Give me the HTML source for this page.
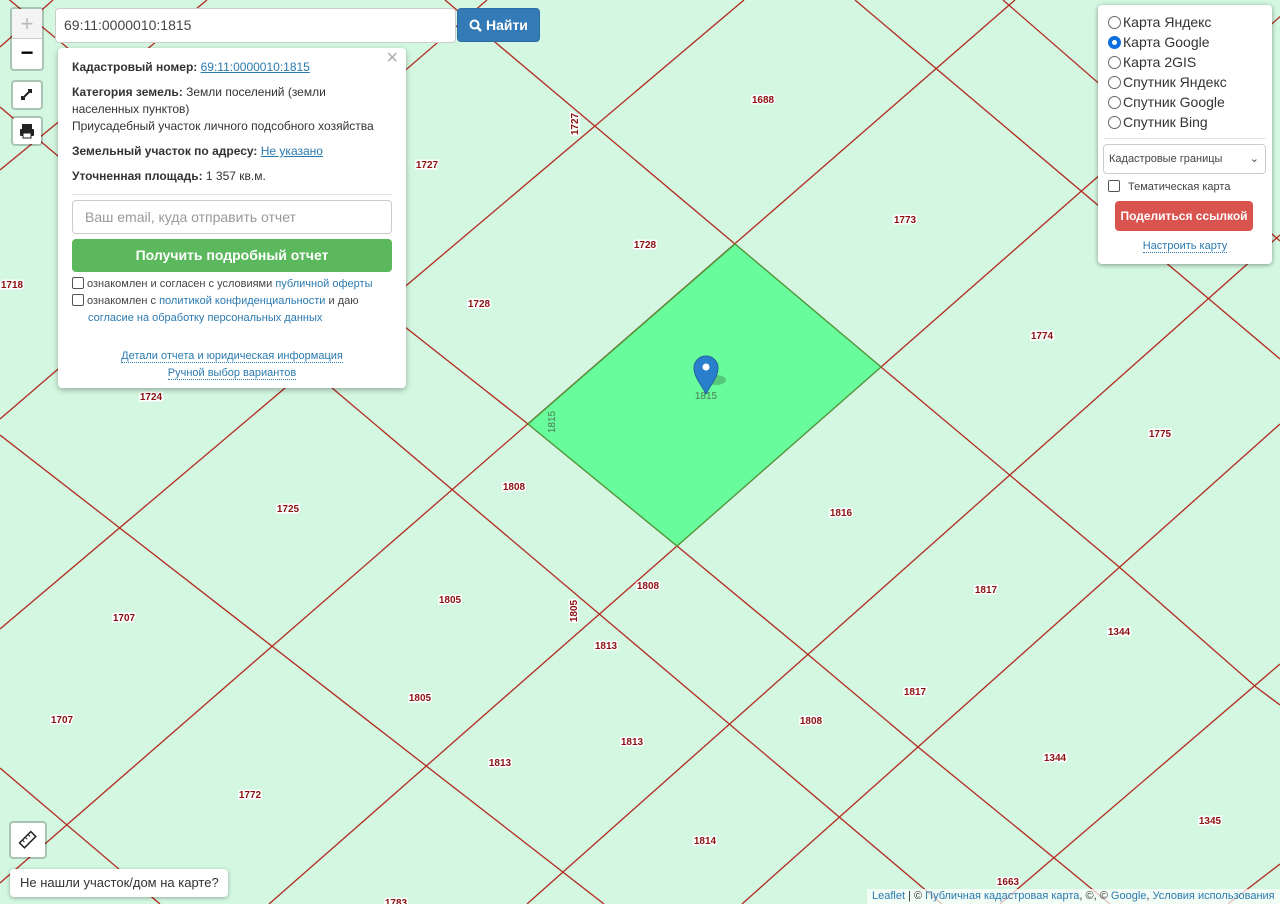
<!DOCTYPE html>
<html><head><meta charset="utf-8"><style>
*{box-sizing:border-box}
body{margin:0;width:1280px;height:904px;overflow:hidden;position:relative;background:#d3f7e0;font-family:"Liberation Sans",Arial,sans-serif;color:#333}
.abs{position:absolute}
svg text.l{font:bold 10px "Liberation Sans",sans-serif;fill:#8b1010;stroke:#fff;stroke-width:3px;paint-order:stroke;text-anchor:middle}
.btn{position:absolute;background:#fff;border:2px solid rgba(0,0,0,.2);border-radius:4px;background-clip:padding-box}
a{color:#2a7ab0}
.pop{left:58px;top:48px;width:348px;height:340px;background:#fff;border-radius:4px;box-shadow:0 2px 6px rgba(0,0,0,.3);font-size:12px;line-height:17px}
.pop b{color:#333}
.cb{display:inline-block;width:12px;height:12px;border:1px solid #555;border-radius:2px;vertical-align:-2px;margin-right:3px;background:#fff}
.rp{left:1098px;top:5px;width:174px;height:259px;background:#fff;border-radius:4px;box-shadow:0 1px 5px rgba(0,0,0,.4);font-size:14px}
.rad{display:block;height:20px;line-height:20px;padding-left:10px;color:#333}
.rad i{display:inline-block;width:13px;height:13px;border:1px solid #666;border-radius:50%;vertical-align:-2px;margin-right:2px}
</style></head><body>
<svg class="abs" style="left:0;top:0" width="1280" height="904">
<g stroke="#b32a20" stroke-width="1.3" fill="none">
<polyline points="445,0 735,244 881,367 1118,566 1256,687 1280,705"/>
<line x1="855" y1="0" x2="1280" y2="359"/>
<line x1="1003" y1="0" x2="1280" y2="241"/>
<polyline points="0,-8 400,323 528,424 677,546 805,652 918,747 1064,866 1110,904"/>
<line x1="0" y1="107" x2="942" y2="904"/>
<line x1="0" y1="435" x2="604" y2="904"/>
<line x1="0" y1="768" x2="160" y2="904"/>
<line x1="0" y1="419" x2="487" y2="0"/>
<line x1="0" y1="629" x2="744" y2="0"/>
<line x1="0" y1="883" x2="1015" y2="0"/>
<polyline points="269,904 677,546 881,367 1299,0"/>
<line x1="527" y1="904" x2="1280" y2="235"/>
<line x1="742" y1="904" x2="1280" y2="424"/>
<line x1="1000" y1="904" x2="1280" y2="664"/>
<line x1="1228" y1="904" x2="1280" y2="864"/>
<line x1="0" y1="47" x2="53" y2="0"/>
<line x1="0" y1="170" x2="207" y2="0"/>
</g>
<polygon points="735,244 881,367 677,546 528,424" fill="#69fc9c" stroke="#4d9a3c" stroke-width="1.3"/>
<g>
<text class="l" x="763" y="103">1688</text>
<text class="l" x="427" y="168">1727</text>
<text class="l" x="645" y="248">1728</text>
<text class="l" x="905" y="223">1773</text>
<text class="l" x="479" y="307">1728</text>
<text class="l" x="12" y="288">1718</text>
<text class="l" x="1042" y="339">1774</text>
<text class="l" x="151" y="400">1724</text>
<text class="l" x="1160" y="437">1775</text>
<text class="l" x="514" y="490">1808</text>
<text class="l" x="288" y="512">1725</text>
<text class="l" x="841" y="516">1816</text>
<text class="l" x="648" y="589">1808</text>
<text class="l" x="450" y="603">1805</text>
<text class="l" x="986" y="593">1817</text>
<text class="l" x="124" y="621">1707</text>
<text class="l" x="1119" y="635">1344</text>
<text class="l" x="606" y="649">1813</text>
<text class="l" x="420" y="701">1805</text>
<text class="l" x="915" y="695">1817</text>
<text class="l" x="811" y="724">1808</text>
<text class="l" x="62" y="723">1707</text>
<text class="l" x="632" y="745">1813</text>
<text class="l" x="1055" y="761">1344</text>
<text class="l" x="500" y="766">1813</text>
<text class="l" x="250" y="798">1772</text>
<text class="l" x="1210" y="824">1345</text>
<text class="l" x="705" y="844">1814</text>
<text class="l" x="1008" y="885">1663</text>
<text class="l" x="396" y="906">1783</text>
<text class="l" x="577" y="611" transform="rotate(-90 577 611)">1805</text>
<text class="l" x="578" y="124" transform="rotate(-90 578 124)">1727</text>
<text x="555" y="422" transform="rotate(-90 555 422)" font-family="Liberation Sans" font-size="10" fill="#4b7a50" text-anchor="middle">1815</text>
<text x="706" y="399" font-family="Liberation Sans" font-size="10" fill="#4b7a50" text-anchor="middle">1815</text>
</g>
<ellipse cx="716" cy="380" rx="10" ry="5" fill="rgba(0,0,0,.2)"/>
<path d="M706 394 C701 384 694 377 694 368 A12 12 0 0 1 718 368 C718 377 711 384 706 394Z" fill="#2a7fcd" stroke="#1f62a0"/>
<circle cx="706" cy="367" r="3.5" fill="#fff"/>
</svg>

<div class="btn" style="left:10px;top:7px;width:34px;height:64px">
<div style="height:30px;border-bottom:1px solid #ccc;background:#f4f4f4;color:#bbb;font-size:22px;text-align:center;line-height:30px">+</div>
<div style="height:30px;color:#000;font-size:22px;text-align:center;line-height:28px;font-weight:bold">−</div></div>
<div class="btn" style="left:11px;top:80px;width:32px;height:30px"><svg width="28" height="26"><path d="M9 17l9-9M15 8h3v3M9 14v3h3" stroke="#222" stroke-width="2" fill="none"/></svg></div>
<div class="btn" style="left:11px;top:116px;width:32px;height:30px"><svg width="28" height="26"><rect x="9" y="6" width="10" height="5" fill="#222"/><rect x="7" y="11" width="14" height="7" rx="1" fill="#222"/><rect x="10" y="15" width="8" height="5" fill="#fff" stroke="#222"/></svg></div>

<div class="abs" style="left:55px;top:8px;width:401px;height:35px;background:#fff;border:1px solid #ccc;border-radius:4px;font-size:14px;line-height:33px;padding-left:8px;color:#444">69:11:0000010:1815</div>
<div class="abs" style="left:457px;top:8px;width:83px;height:34px;background:#337ab7;border:1px solid #2e6da4;border-radius:4px;color:#fff;font-size:14px;font-weight:bold;line-height:32px;text-align:center"><svg width="13" height="13" style="vertical-align:-2px"><circle cx="5.5" cy="5.5" r="4" stroke="#fff" stroke-width="2" fill="none"/><path d="M8.5 8.5l3.5 3.5" stroke="#fff" stroke-width="2.5"/></svg> Найти</div>

<div class="abs pop">
<div class="abs" style="right:8px;top:2px;font-size:20px;color:#aaa">×</div>
<div style="padding:11px 14px 0">
<div><b>Кадастровый номер:</b> <a href="#">69:11:0000010:1815</a></div>
<div style="margin-top:8px"><b>Категория земель:</b> Земли поселений (земли населенных пунктов)<br>Приусадебный участок личного подсобного хозяйства</div>
<div style="margin-top:8px"><b>Земельный участок по адресу:</b> <a href="#">Не указано</a></div>
<div style="margin-top:8px"><b>Уточненная площадь:</b> 1 357 кв.м.</div>
<div style="border-top:1px solid #e5e5e5;margin-top:9px"></div>
<div style="margin-top:5px;height:34px;border:1px solid #ccc;border-radius:4px;font-size:14px;color:#999;line-height:32px;padding-left:12px">Ваш email, куда отправить отчет</div>
<div style="margin-top:5px;height:33px;background:#5cb85c;border-radius:4px;color:#fff;font-size:14px;font-weight:bold;text-align:center;line-height:33px">Получить подробный отчет</div>
<div style="margin-top:4px;font-size:11px;line-height:17px;color:#444"><span class="cb"></span>ознакомлен и согласен с условиями <a style="text-decoration:none">публичной оферты</a><br><span class="cb"></span>ознакомлен с <a style="text-decoration:none">политикой конфиденциальности</a> и даю<br><a style="text-decoration:none;padding-left:16px">согласие на обработку персональных данных</a></div>
<div style="margin-top:21px;text-align:center;font-size:11px;line-height:17px"><a style="text-decoration:none;border-bottom:1px dotted #2a7ab0">Детали отчета и юридическая информация</a><br><a style="text-decoration:none;border-bottom:1px dotted #2a7ab0">Ручной выбор вариантов</a></div>
</div></div>

<div class="abs rp"><div style="padding-top:7px">
<span class="rad"><i></i>Карта Яндекс</span>
<span class="rad"><i style="border:4px solid #0b6fe0"></i>Карта Google</span>
<span class="rad"><i></i>Карта 2GIS</span>
<span class="rad"><i></i>Спутник Яндекс</span>
<span class="rad"><i></i>Спутник Google</span>
<span class="rad"><i></i>Спутник Bing</span></div>
<div style="margin:6px 6px 0;border-top:1px solid #e5e5e5"></div>
<div style="margin:5px 6px 0 5px;height:30px;border:1px solid #ccc;border-radius:4px;font-size:11px;line-height:28px;padding-left:5px;color:#444;position:relative">Кадастровые границы<span style="position:absolute;right:6px;top:0;font-size:11px">&#8964;</span></div>
<div style="margin:6px 0 0 10px;font-size:11px;color:#444"><span class="cb" style="margin-right:8px"></span>Тематическая карта</div>
<div style="margin:8px 0 0 17px;width:138px;height:30px;background:#d9534f;border-radius:4px;color:#fff;font-size:12px;font-weight:bold;line-height:30px;text-align:center">Поделиться ссылкой</div>
<div style="text-align:center;margin-top:9px;font-size:11px"><a style="text-decoration:none;border-bottom:1px dotted #2a7ab0">Настроить карту</a></div>
</div>

<div class="btn" style="left:9px;top:821px;width:38px;height:38px"><svg width="34" height="34"><g transform="rotate(-45 17 17)"><rect x="9" y="13" width="16" height="7" fill="none" stroke="#222" stroke-width="1.5"/><path d="M13 13v3M17 13v3M21 13v3" stroke="#222"/></g></svg></div>
<div class="abs" style="left:10px;top:869px;width:218px;height:28px;background:#fff;border-radius:4px;box-shadow:0 1px 4px rgba(0,0,0,.3);font-size:13px;line-height:28px;padding-left:10px;color:#333">Не нашли участок/дом на карте?</div>
<div class="abs" style="left:867px;top:889px;width:413px;height:15px;background:rgba(255,255,255,.7);font-size:11px;line-height:15px;padding-left:5px;color:#333"><a style="text-decoration:none">Leaflet</a> | © <a style="text-decoration:none">Публичная кадастровая карта</a>, ©, © <a style="text-decoration:none">Google</a>, <a style="text-decoration:none">Условия использования</a></div>
</body></html>
